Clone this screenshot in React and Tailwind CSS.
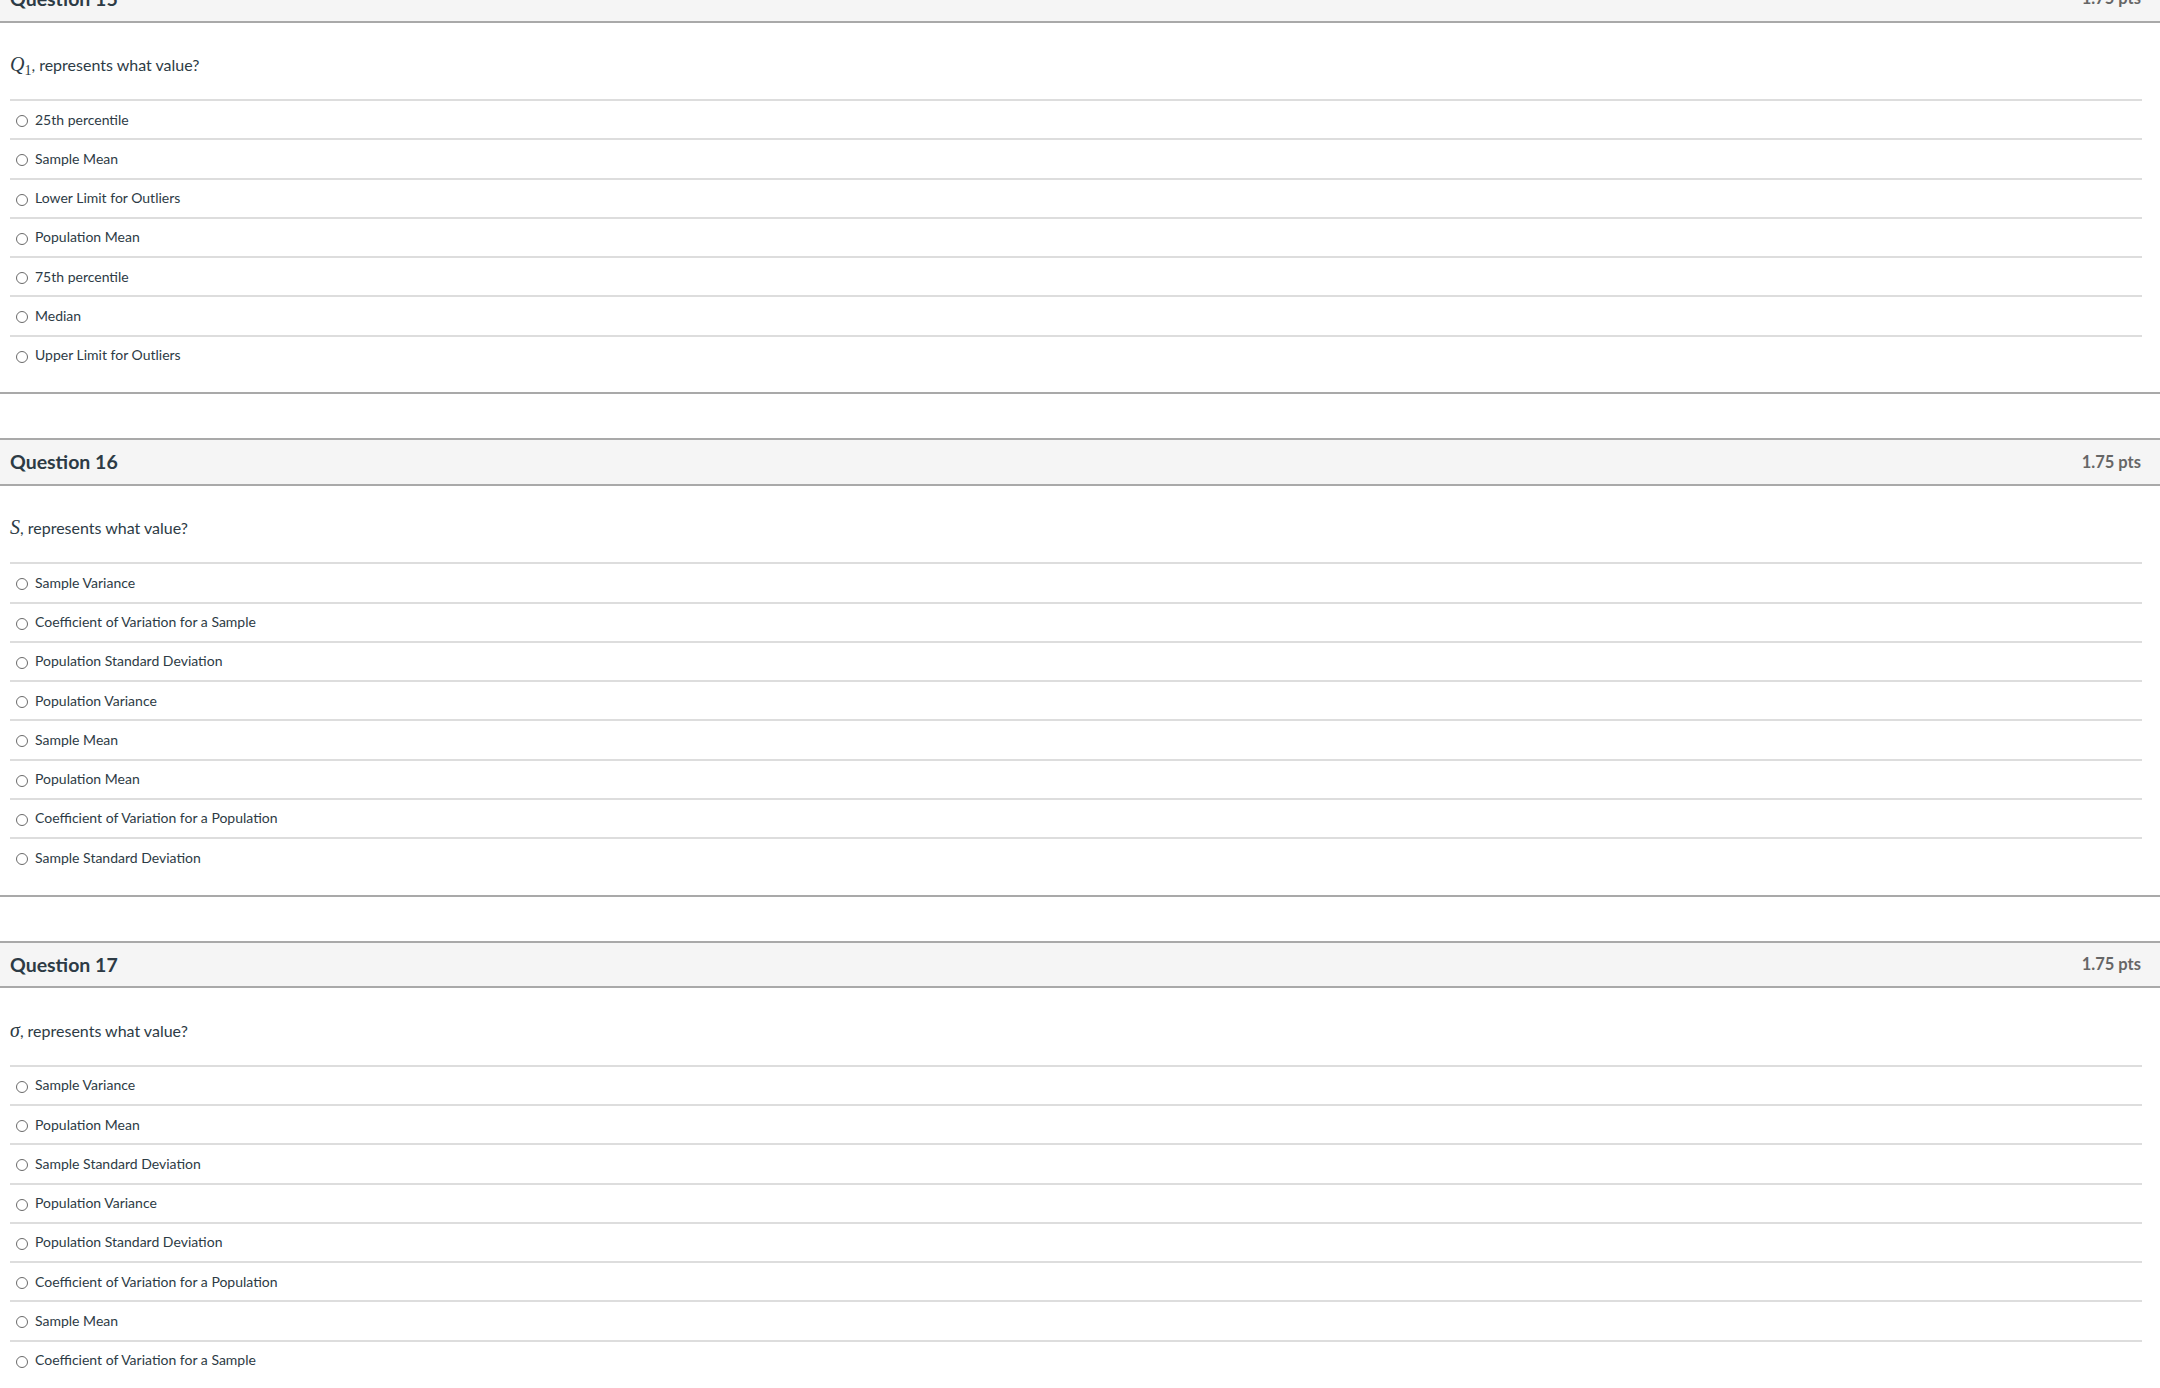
const questions = [
  {
    num: 15,
    prompt: (
      <>
        <span className="font-['Liberation_Serif',serif] italic text-[20px]">Q</span>
        <span className="font-['Liberation_Serif',serif] text-[14px] align-[-4px]">1</span>
      </>
    ),
    options: [
      "25th percentile",
      "Sample Mean",
      "Lower Limit for Outliers",
      "Population Mean",
      "75th percentile",
      "Median",
      "Upper Limit for Outliers",
    ],
  },
  {
    num: 16,
    prompt: <span className="font-['Liberation_Serif',serif] italic text-[20px]">S</span>,
    options: [
      "Sample Variance",
      "Coefficient of Variation for a Sample",
      "Population Standard Deviation",
      "Population Variance",
      "Sample Mean",
      "Population Mean",
      "Coefficient of Variation for a Population",
      "Sample Standard Deviation",
    ],
  },
  {
    num: 17,
    prompt: <span className="font-['Liberation_Serif',serif] italic text-[20px]">σ</span>,
    options: [
      "Sample Variance",
      "Population Mean",
      "Sample Standard Deviation",
      "Population Variance",
      "Population Standard Deviation",
      "Coefficient of Variation for a Population",
      "Sample Mean",
      "Coefficient of Variation for a Sample",
    ],
  },
];

function Question({ q, first }) {
  return (
    <div className={first ? "-mt-[25px] mb-[44px]" : "mb-[44px]"}>
      {/* Header */}
      <div className="h-[47.5px] border-y-2 border-[#a9a9a9] bg-[#f5f5f5] flex items-center justify-between pl-[10px] pr-[19px]">
        <h2 className="text-[19.5px] font-bold text-[#2d3b45]">Question {q.num}</h2>
        <span className="text-[16.5px] font-bold text-[#666666]">1.75 pts</span>
      </div>

      {/* Body */}
      <div className="border-b-2 border-[#a9a9a9] pl-[10px] pr-[18px] pt-[29.5px] pb-[18.5px]">
        <p className="h-[24px] leading-[24px] text-[16px] text-[#2d3b45] mb-[23px]">
          {q.prompt}, represents what value?
        </p>
        {q.options.map((opt, i) => (
          <div
            key={i}
            className="h-[39.25px] border-t-2 border-[#dddddd] flex items-center pl-[6px]"
          >
            <span className="w-[12px] h-[12px] rounded-full border border-[#6a6a6a] mt-[3px] mr-[7px] shrink-0" />
            <span className="text-[14px] text-[#2d3b45] -mt-[1px]">{opt}</span>
          </div>
        ))}
      </div>
    </div>
  );
}

export default function App() {
  return (
    <div className="h-screen overflow-hidden bg-white font-['Lato',sans-serif]">
      {questions.map((q, i) => (
        <Question key={q.num} q={q} first={i === 0} />
      ))}
    </div>
  );
}
